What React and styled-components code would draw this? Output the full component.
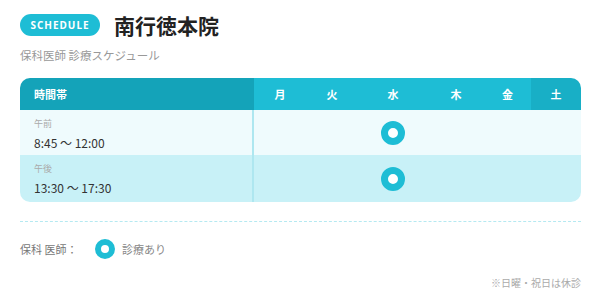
import React from "react";
import styled, { createGlobalStyle } from "styled-components";

const Global = createGlobalStyle`
  body {
    margin: 0;
    background: #fff;
    font-family: "Noto Sans CJK JP", "Noto Sans", sans-serif;
  }
`;

const mainColor = "#1ebdd5";

const Page = styled.div`
  padding: 13px 19px 0 20px;
  width: 561px;
`;

const TitleRow = styled.div`
  display: flex;
  align-items: center;
  gap: 14px;
`;

const Badge = styled.span`
  display: inline-flex;
  align-items: center;
  justify-content: center;
  width: 80px;
  height: 22px;
  border-radius: 11px;
  background: ${mainColor};
  color: #fff;
  font-family: "Noto Sans", sans-serif;
  font-weight: bold;
  font-size: 10px;
  letter-spacing: 1px;
`;

const Title = styled.h1`
  margin: 0;
  font-size: 21px;
  font-weight: bold;
  color: #222;
  line-height: 24px;
`;

const Sub = styled.p`
  margin: 10px 0 15px;
  font-size: 11.5px;
  color: #999;
  line-height: 16px;
`;

const Table = styled.div`
  display: grid;
  grid-template-columns: 234px 52px 52px 70px 56px 47px 50px;
  border-radius: 10px;
  overflow: hidden;
`;

const Head = styled.div`
  height: 32px;
  display: flex;
  align-items: center;
  justify-content: ${(p) => (p.$left ? "flex-start" : "center")};
  padding-left: ${(p) => (p.$left ? "14px" : "0")};
  background: ${(p) => p.$bg};
  color: #fff;
  font-weight: bold;
  font-size: 11px;
`;

const TimeCell = styled.div`
  height: ${(p) => p.$h}px;
  box-sizing: border-box;
  padding: 8px 0 0 14px;
  background: ${(p) => p.$bg};
  border-right: 2px solid #aee7f0;
  display: flex;
  flex-direction: column;
`;

const Period = styled.span`
  font-size: 9px;
  color: #aaa;
  line-height: 12px;
`;

const Hours = styled.span`
  margin-top: 5px;
  font-size: 12px;
  color: #333;
  line-height: 16px;
`;

const DayCell = styled.div`
  height: ${(p) => p.$h}px;
  background: ${(p) => p.$bg};
  display: flex;
  align-items: center;
  justify-content: center;
`;

const Mark = styled.span`
  display: inline-block;
  box-sizing: border-box;
  width: ${(p) => p.$size}px;
  height: ${(p) => p.$size}px;
  border-radius: 50%;
  border: ${(p) => p.$ring}px solid ${mainColor};
  background: #fff;
`;

const Divider = styled.hr`
  margin: 19px 0 0;
  border: none;
  border-top: 1px dashed #b5e9f1;
`;

const Legend = styled.div`
  display: flex;
  align-items: center;
  margin-top: 17px;
  font-size: 11px;
  color: #777;
`;

const LegendLabel = styled.span`
  width: 75px;
`;

const LegendText = styled.span`
  margin-left: 7px;
  color: #888;
`;

const Note = styled.p`
  margin: 16px 0 0;
  text-align: right;
  font-size: 10px;
  color: #aaa;
`;

const days = [
  { name: "月", bg: "#1ebdd5" },
  { name: "火", bg: "#1ebdd5" },
  { name: "水", bg: "#1ebdd5" },
  { name: "木", bg: "#1ebdd5" },
  { name: "金", bg: "#1ebdd5" },
  { name: "土", bg: "#18afc6" },
];

const rows = [
  { period: "午前", hours: "8:45 〜 12:00", bg: "#effbfd", h: 45, open: ["水"] },
  { period: "午後", hours: "13:30 〜 17:30", bg: "#c8f1f7", h: 47, open: ["水"] },
];

export default function App() {
  return (
    <Page>
      <Global />
      <TitleRow>
        <Badge>SCHEDULE</Badge>
        <Title>南行徳本院</Title>
      </TitleRow>
      <Sub>保科医師 診療スケジュール</Sub>
      <Table>
        <Head $left $bg="#14a3b9">時間帯</Head>
        {days.map((d) => (
          <Head key={d.name} $bg={d.bg}>
            {d.name}
          </Head>
        ))}
        {rows.map((r) => (
          <React.Fragment key={r.period}>
            <TimeCell $bg={r.bg} $h={r.h}>
              <Period>{r.period}</Period>
              <Hours>{r.hours}</Hours>
            </TimeCell>
            {days.map((d) => (
              <DayCell key={d.name} $bg={r.bg} $h={r.h}>
                {r.open.includes(d.name) && <Mark $size={24} $ring={7} />}
              </DayCell>
            ))}
          </React.Fragment>
        ))}
      </Table>
      <Divider />
      <Legend>
        <LegendLabel>保科 医師：</LegendLabel>
        <Mark $size={20} $ring={6} />
        <LegendText>診療あり</LegendText>
      </Legend>
      <Note>※日曜・祝日は休診</Note>
    </Page>
  );
}
